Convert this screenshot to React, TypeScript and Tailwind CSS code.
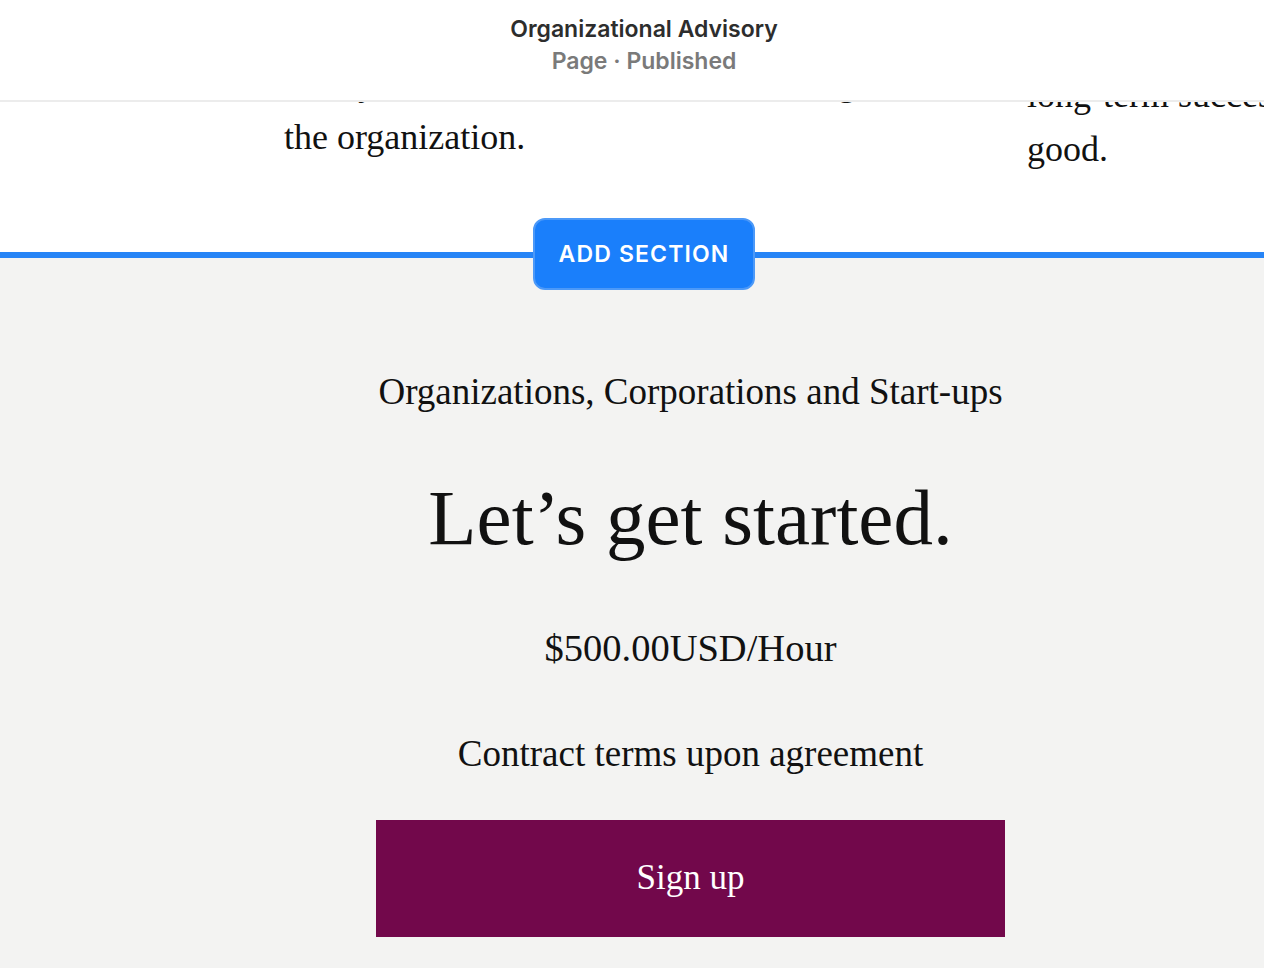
import React from "react";

const serif = { fontFamily: '"Liberation Serif", "Times New Roman", serif' };

const Header = () => (
  <header className="h-[102px] shrink-0 border-b-2 border-[#ececec] bg-white pl-[24px] pt-[13px] text-center font-['Inter',sans-serif] text-[23px] font-semibold leading-[32px]">
    <div className="text-[#2d2d2d]">Organizational Advisory</div>
    <div className="text-[#7a7a7a]">Page · Published</div>
  </header>
);

const PreviousSection = () => (
  <section className="flex h-[150px] shrink-0 overflow-hidden bg-white pl-[284px] text-[36px] leading-[54px] text-[#111]" style={serif}>
    <div className="-mt-[46px] w-[743px] shrink-0 whitespace-nowrap">
      <span className="block">clarity and direction to all those leading in</span>
      <span className="block">the organization.</span>
    </div>
    <div className="-mt-[34px] shrink-0 whitespace-nowrap">
      <span className="block">long-term success and the common</span>
      <span className="block">good.</span>
    </div>
  </section>
);

const AddSection = () => (
  <div className="relative h-[6px] shrink-0 bg-[#2684f6]">
    <button className="absolute left-[533px] top-[-34px] h-[72px] w-[222px] rounded-[12px] border-2 border-[#4c99f8] bg-[#1a7ffb] font-['Inter',sans-serif] text-[23px] font-semibold tracking-[0.05em] text-white">
      ADD SECTION
    </button>
  </div>
);

export default function App() {
  return (
    <div className="flex min-h-screen w-full flex-col overflow-hidden bg-[#f3f3f2]">
      <Header />
      <PreviousSection />
      <AddSection />
      <main className="flex-1 bg-[#f3f3f2] pl-[376px] pt-[112px] pb-[40px] text-[#111]" style={serif}>
        <div className="flex w-[629px] flex-col items-center text-center">
          <p className="text-[37px] leading-[43px]">Organizations, Corporations and Start-ups</p>
          <h1 className="mt-[62px] whitespace-nowrap text-[79px] leading-[86px]">Let’s get started.</h1>
          <p className="mt-[66px] text-[38.5px] leading-[43px]">$500.00USD/Hour</p>
          <p className="mt-[62px] text-[37px] leading-[43px]">Contract terms upon agreement</p>
          <button className="mt-[45px] h-[117px] w-[629px] bg-[#72084b] text-[35px] text-white">Sign up</button>
        </div>
      </main>
    </div>
  );
}
